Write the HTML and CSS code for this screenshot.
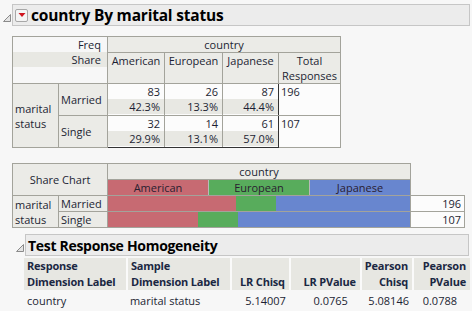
FILE: index.html
```html
<!DOCTYPE html>
<html lang="en">
  <head>
    <meta charset="UTF-8" />
    <title>country By marital status</title>
    <link rel="stylesheet" href="styles.css">
  </head>
  <body>
    <div class="outline">
      <svg class="disclose" width="10" height="10" viewBox="0 0 10 10"><polygon points="8.5,1.5 8.5,8.5 1.5,8.5" fill="#e4e4e4" stroke="#8a8a8a" stroke-width="1"/></svg>
      <div class="outline-title">
        <span class="hotspot"><svg width="10" height="10" viewBox="0 0 10 10"><polygon points="1.5,3 8.5,3 5,7" fill="#d0141e"/></svg></span>
        country By marital status
      </div>
    </div>

    <table class="xtab">
      <colgroup><col style="width:46px"><col style="width:49px"><col style="width:57px"><col style="width:58px"><col style="width:56px"><col style="width:62px"></colgroup>
      <tr class="r1">
        <td class="key" colspan="2" rowspan="2">
          <div class="line">Freq</div>
          <div class="line shade">Share</div>
        </td>
        <td class="hdr" colspan="4">country</td>
      </tr>
      <tr class="r2">
        <td class="hdr">American</td>
        <td class="hdr">European</td>
        <td class="hdr">Japanese</td>
        <td class="hdr">Total<br>Responses</td>
      </tr>
      <tr class="r3">
        <td class="rlab" rowspan="2">marital<br>status</td>
        <td class="rlab">Married</td>
        <td class="cell tl"><div class="line">83</div><div class="line shade">42.3%</div></td>
        <td class="cell t"><div class="line">26</div><div class="line shade">13.3%</div></td>
        <td class="cell tr"><div class="line">87</div><div class="line shade">44.4%</div></td>
        <td class="total">196</td>
      </tr>
      <tr class="r3">
        <td class="rlab">Single</td>
        <td class="cell bl"><div class="line">32</div><div class="line shade">29.9%</div></td>
        <td class="cell b"><div class="line">14</div><div class="line shade">13.1%</div></td>
        <td class="cell br"><div class="line">61</div><div class="line shade">57.0%</div></td>
        <td class="total">107</td>
      </tr>
    </table>

    <table class="chart">
      <colgroup><col style="width:46px"><col style="width:49px"><col style="width:300px"><col style="width:54px"></colgroup>
      <tr>
        <td class="hdr mid" colspan="2" rowspan="2">Share Chart</td>
        <td class="hdr">country</td>
        <td class="blank"></td>
      </tr>
      <tr>
        <td class="legend">
          <div class="bars">
            <span class="seg am">American</span><span class="seg eu">European</span><span class="seg jp">Japanese</span>
          </div>
        </td>
        <td class="blank"></td>
      </tr>
      <tr>
        <td class="rlab" rowspan="2">marital<br>status</td>
        <td class="rlab">Married</td>
        <td class="bar">
          <div class="bars">
            <span class="am" style="width:42.3%"></span><span class="eu" style="width:13.3%"></span><span class="jp" style="width:44.4%"></span>
          </div>
        </td>
        <td class="num">196</td>
      </tr>
      <tr>
        <td class="rlab">Single</td>
        <td class="bar">
          <div class="bars">
            <span class="am" style="width:29.9%"></span><span class="eu" style="width:13.1%"></span><span class="jp" style="width:57.0%"></span>
          </div>
        </td>
        <td class="num">107</td>
      </tr>
    </table>

    <div class="outline sub">
      <svg class="disclose" width="10" height="10" viewBox="0 0 10 10"><polygon points="8.5,1.5 8.5,8.5 1.5,8.5" fill="#e4e4e4" stroke="#8a8a8a" stroke-width="1"/></svg>
      <div class="outline-title small">Test Response Homogeneity</div>
    </div>

    <table class="tests">
      <colgroup><col style="width:103px"><col style="width:104px"><col style="width:59px"><col style="width:71px"><col style="width:51px"><col style="width:57px"></colgroup>
      <tr class="head">
        <th class="left">Response<br>Dimension Label</th>
        <th class="left">Sample<br>Dimension Label</th>
        <th>LR Chisq</th>
        <th>LR PValue</th>
        <th>Pearson<br>Chisq</th>
        <th>Pearson<br>PValue</th>
      </tr>
      <tr>
        <td class="left">country</td>
        <td class="left">marital status</td>
        <td>5.14007</td>
        <td class="pv">0.0765</td>
        <td>5.08146</td>
        <td class="pv">0.0788</td>
      </tr>
    </table>
  </body>
</html>
```

FILE: styles.css
```css
body {
  margin: 0;
  padding: 4px 2px 0 2px;
  background: #f7f7f7;
  color: #1c1f33;
  font-family: "Open Sans", "Noto Sans", sans-serif;
  font-size: 11px;
}

/* outline boxes */
.outline {
  display: flex;
  align-items: center;
}
.disclose {
  flex: none;
  margin-top: 6px;
}
.outline-title {
  flex-grow: 1;
  display: flex;
  align-items: center;
  height: 20px;
  border: 1px solid #c6c6c6;
  background: #ececec;
  color: #000;
  font-weight: bold;
  font-size: 15.5px;
  letter-spacing: -0.2px;
  padding-left: 2px;
}
.outline-title.small {
  font-size: 14px;
  letter-spacing: -0.3px;
}
.hotspot {
  display: inline-flex;
  align-items: center;
  justify-content: center;
  width: 11px;
  height: 11px;
  margin-right: 3px;
  border: 1px solid #a8a8a8;
  border-radius: 2px;
  background: #f4f4f4;
}
.outline.sub {
  margin: 6px 1px 0 13px;
}

/* crosstab */
table {
  border-collapse: collapse;
  table-layout: fixed;
}
.xtab {
  margin: 10px 0 0 10px;
  line-height: 15px;
}
.xtab td,
.chart td {
  border: 1px solid #a3a39b;
  padding: 0;
  vertical-align: top;
}
.xtab .r1 td {
  height: 15px;
}
.xtab .r2 td {
  height: 30px;
}
.xtab .r3 td {
  height: 31px;
}
.line {
  height: 15px;
  text-align: right;
  padding-right: 4px;
  background: #fcfcfc;
}
.line.shade {
  background: #e8e8e3;
}
.key .line {
  padding-right: 6px;
  background: transparent;
}
.key .line.shade {
  background: #e8e8e3;
}
.hdr {
  background: #ebebe7;
  text-align: center;
}
.chart .hdr.mid {
  vertical-align: middle;
}
.xtab .rlab,
.chart .rlab {
  background: #ebebe7;
  vertical-align: middle;
  padding-left: 2px;
}
.xtab .total {
  background: #fcfcfc;
  padding-left: 2px;
}
.xtab td.cell {
  background: #fcfcfc;
}
.xtab td.tl { border-top-color: #333; border-left-color: #333; }
.xtab td.t { border-top-color: #333; }
.xtab td.tr { border-top-color: #333; border-right-color: #333; }
.xtab td.bl { border-bottom-color: #333; border-left-color: #333; }
.xtab td.b { border-bottom-color: #333; }
.xtab td.br { border-bottom-color: #333; border-right-color: #333; }

/* share chart */
.chart {
  margin: 15px 0 0 10px;
  line-height: 15px;
}
.chart td {
  height: 15px;
}
.chart td.blank {
  border: none;
}
.bars {
  display: flex;
  height: 15px;
}
.seg {
  width: 100px;
  text-align: center;
  color: #2a2030;
  border-right: 1px solid #b9b9b9;
}
.seg.jp {
  border-right: none;
}
.am { background: #c76a72; }
.eu { background: #58ac5c; }
.jp { background: #6886cf; }
.chart .num {
  background: #fcfcfc;
  text-align: right;
  padding-right: 3px;
}

/* tests table */
.tests {
  margin: 2px 0 0 22px;
  line-height: 16px;
}
.tests th {
  background: #e7e7e2;
  border-right: 2px solid #fafafa;
  color: #1b2742;
  font-weight: bold;
  letter-spacing: -0.2px;
  text-align: right;
  vertical-align: bottom;
  padding: 0 4px 0 3px;
  height: 32px;
}
.tests th:last-child {
  border-right: none;
}
.tests td {
  text-align: right;
  padding: 0 4px 0 3px;
  height: 21px;
}
.tests .left {
  text-align: left;
}
.tests td.pv {
  padding-right: 13px;
}
```
